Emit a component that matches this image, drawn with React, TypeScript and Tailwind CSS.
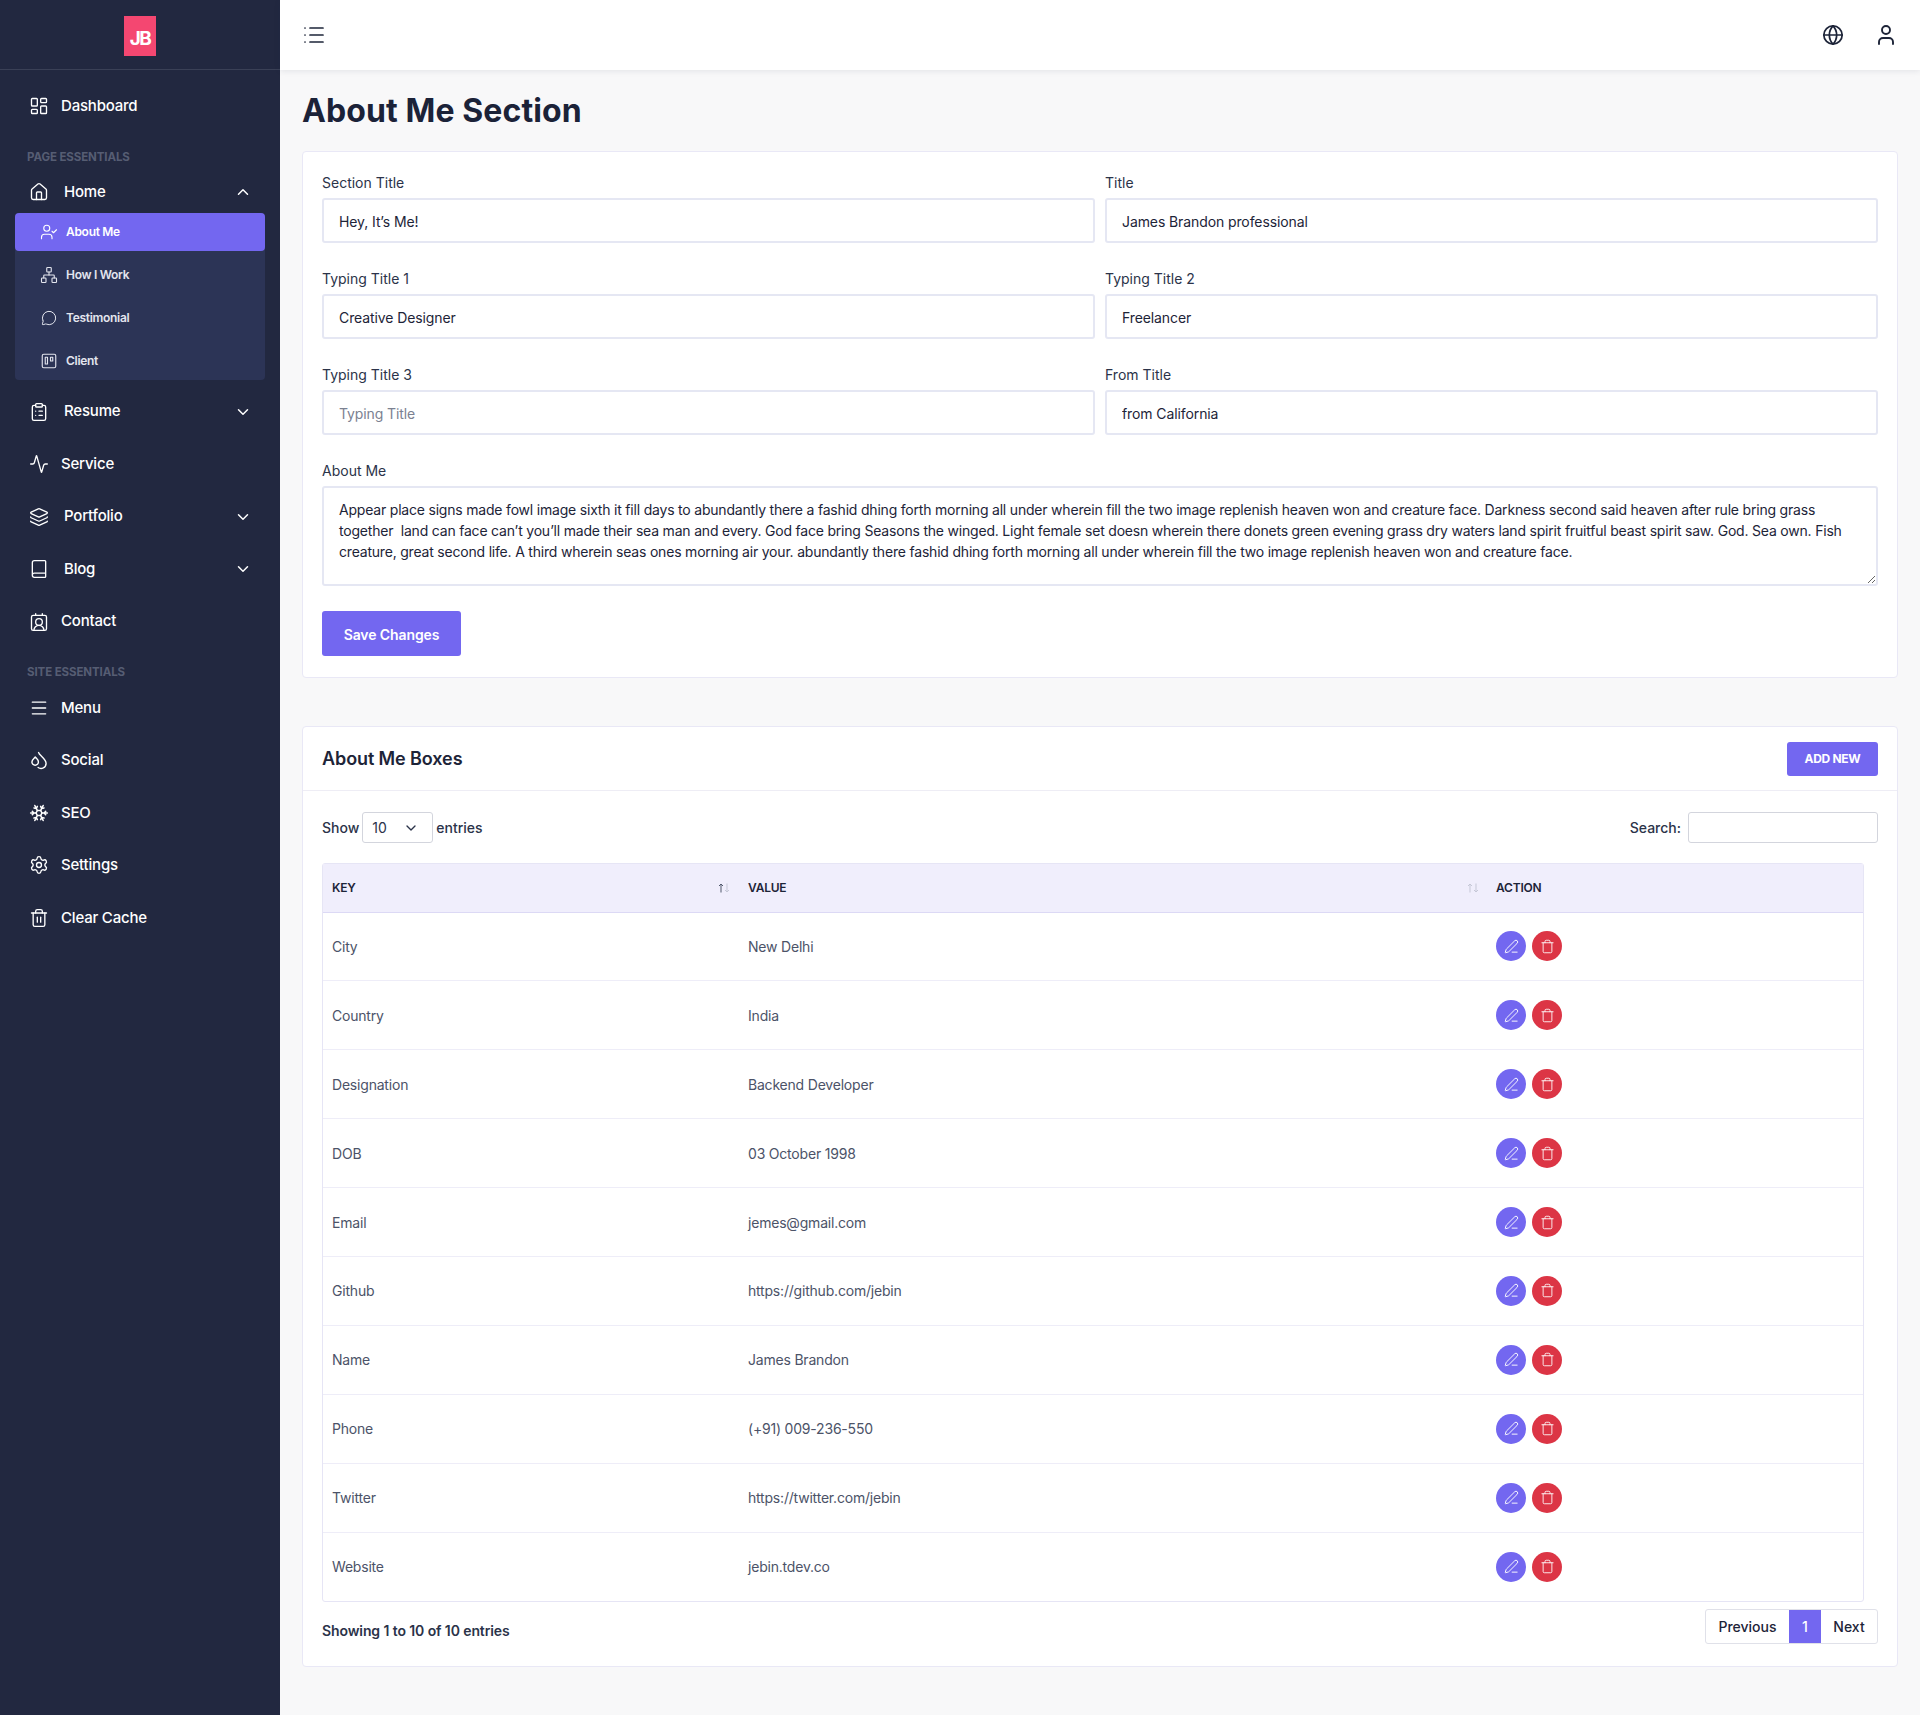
import React from "react";
import {
  LayoutDashboard, Home, ChevronUp, ChevronDown, UserCheck, Network, MessageCircle, Trello, ClipboardList,
  Activity, Layers, Book, ContactRound, Menu, Snowflake, Settings, Trash2, Trash, List, Globe, User, PenLine,
} from "lucide-react";

const font = "font-['Inter','Liberation_Sans',sans-serif]";

function SocialIcon() {
  return (
    <svg width="20" height="20" viewBox="0 0 24 24" fill="none" stroke="currentColor" strokeWidth="1.7" strokeLinecap="round" strokeLinejoin="round">
      <path d="M7.500 8.500c1.800 2 3.800 3.300 3.800 5.800a3.900 3.900 0 1 1-7.800 0c0-2.500 2.200-3.800 4-5.800z" />
      <path d="M11.500 3l1.200 2.200c3 3.300 7.800 6.500 7.800 11a6 6 0 0 1-9.500 4.800" />
    </svg>
  );
}

function NavItem({ icon, label, chevron, wide, h = "h-[52.500px]" }: { icon: React.ReactNode; label: string; chevron?: "up" | "down"; wide?: boolean; h?: string }) {
  return (
    <div className={`flex items-center ${h} pl-[29px] pr-[30px] text-[15px] font-medium tracking-[-0.2px] text-white`}>
      <span className="flex w-[20px] justify-center">{icon}</span>
      <span className={wide ? "ml-[15px]" : "ml-[12px]"}>{label}</span>
      {chevron === "up" && <ChevronUp size={18} className="ml-auto -mr-[2px]" />}
      {chevron === "down" && <ChevronDown size={18} className="ml-auto -mr-[2px]" />}
    </div>
  );
}

function SubItem({ icon, label, active }: { icon: React.ReactNode; label: string; active?: boolean }) {
  return (
    <div className={`flex h-[38px] items-center rounded-[4px] pl-[25px] text-[12px] font-semibold tracking-[-0.3px] ${active ? "bg-[#7367f0] text-white" : "text-[#e3e5ee]"}`}>
      <span className="flex w-[18px] justify-center">{icon}</span>
      <span className="ml-[8px]">{label}</span>
    </div>
  );
}

function SectionLabel({ children, cls }: { children: React.ReactNode; cls: string }) {
  return <div className={`pl-[27px] text-[11.500px] font-bold tracking-[-0.1px] text-[#565d73] ${cls}`}>{children}</div>;
}

function Sidebar() {
  const s = 20;
  const sw = 1.6;
  return (
    <aside className="w-[280px] shrink-0 bg-[#222840]">
      <div className="flex h-[70px] items-start justify-center border-b border-[#3a4056] pt-[16px]">
        <div className="flex h-[40px] w-[32px] items-center justify-center bg-[#f44771] pt-[7px] text-[19px] font-bold tracking-[-1.500px] text-white">JB</div>
      </div>
      <div className="pt-[10px]">
        <NavItem icon={<LayoutDashboard size={s} strokeWidth={sw} />} label="Dashboard" />
        <SectionLabel cls="pt-[16.500px] pb-[4.500px]">PAGE ESSENTIALS</SectionLabel>
        <NavItem icon={<Home size={s} strokeWidth={sw} />} label="Home" chevron="up" wide h="h-[42px]" />
        <div className="mx-[15px] mb-[5.500px] flex flex-col gap-[5px] rounded-[4px] bg-[#2c3456]">
          <SubItem active icon={<UserCheck size={18} strokeWidth={1.5} />} label="About Me" />
          <SubItem icon={<Network size={18} strokeWidth={1.5} />} label="How I Work" />
          <SubItem icon={<MessageCircle size={16} strokeWidth={1.5} />} label="Testimonial" />
          <SubItem icon={<Trello size={18} strokeWidth={1.5} />} label="Client" />
        </div>
        <NavItem icon={<ClipboardList size={s} strokeWidth={sw} />} label="Resume" chevron="down" wide />
        <NavItem icon={<Activity size={s} strokeWidth={sw} />} label="Service" />
        <NavItem icon={<Layers size={s} strokeWidth={sw} />} label="Portfolio" chevron="down" wide />
        <NavItem icon={<Book size={s} strokeWidth={sw} />} label="Blog" chevron="down" wide />
        <NavItem icon={<ContactRound size={s} strokeWidth={sw} />} label="Contact" />
        <SectionLabel cls="pt-[16.500px]">SITE ESSENTIALS</SectionLabel>
        <NavItem icon={<Menu size={s} strokeWidth={sw} />} label="Menu" />
        <NavItem icon={<SocialIcon />} label="Social" />
        <NavItem icon={<Snowflake size={s} strokeWidth={1.9} />} label="SEO" />
        <NavItem icon={<Settings size={s} strokeWidth={sw} />} label="Settings" />
        <NavItem icon={<Trash2 size={s} strokeWidth={sw} />} label="Clear Cache" />
      </div>
    </aside>
  );
}

function Field({ label, value, placeholder }: { label: string; value?: string; placeholder?: string }) {
  return (
    <div>
      <label className="mb-[6px] block text-[14px] leading-[19px] text-[#2b3349]">{label}</label>
      <input
        readOnly
        value={value ?? ""}
        placeholder={placeholder}
        className="block h-[45px] w-full rounded-[3px] border-2 border-[#e5e7f3] bg-white px-[15px] pt-[1px] text-[14px] tracking-[-0.1px] text-[#1d2438] outline-none placeholder:text-[#7b8191]"
      />
    </div>
  );
}

const rows: [string, string][] = [
  ["City", "New Delhi"],
  ["Country", "India"],
  ["Designation", "Backend Developer"],
  ["DOB", "03 October 1998"],
  ["Email", "jemes@gmail.com"],
  ["Github", "https://github.com/jebin"],
  ["Name", "James Brandon"],
  ["Phone", "(+91) 009-236-550"],
  ["Twitter", "https://twitter.com/jebin"],
  ["Website", "jebin.tdev.co"],
];

const about =
  "Appear place signs made fowl image sixth it fill days to abundantly there a fashid dhing forth morning all under wherein fill the two image replenish heaven won and creature face. Darkness second said heaven after rule bring grass together  land can face can’t you’ll made their sea man and every. God face bring Seasons the winged. Light female set doesn wherein there donets green evening grass dry waters land spirit fruitful beast spirit saw. God. Sea own. Fish creature, great second life. A third wherein seas ones morning air your. abundantly there fashid dhing forth morning all under wherein fill the two image replenish heaven won and creature face.";

function SortArrows({ dim }: { dim?: boolean }) {
  return (
    <svg width="12" height="10" viewBox="0 0 12 10" fill="none" strokeWidth="1" className="ml-auto">
      <path d="M3 9.500V1M1 3l2-2 2 2" stroke={dim ? "#c5c7d6" : "#4f566b"} />
      <path d="M9 .5V9M7 7l2 2 2-2" stroke="#c5c7d6" />
    </svg>
  );
}

function Table() {
  return (
    <div className="mr-[14px] rounded-[3px] border border-[#e6e5f5]">
      <table className="w-full table-fixed border-collapse">
        <colgroup>
          <col className="w-[416px]" />
          <col className="w-[748px]" />
          <col />
        </colgroup>
        <thead>
          <tr className="h-[48px] border-b border-[#dcd9f5] bg-[#f0eefc] text-left text-[12px] text-[#1d2438]">
            <th className="pl-[9px] pr-[9px] font-semibold tracking-[-0.2px]"><div className="flex items-center"><span>KEY</span><SortArrows /></div></th>
            <th className="pl-[9px] pr-[8px] font-semibold tracking-[-0.2px]"><div className="flex items-center"><span>VALUE</span><SortArrows dim /></div></th>
            <th className="pl-[9px] font-semibold tracking-[-0.2px]">ACTION</th>
          </tr>
        </thead>
        <tbody>
          {rows.map(([k, v], i) => (
            <tr key={k} className={`h-[68.900px] text-[14px] tracking-[-0.2px] text-[#4c5368] ${i < rows.length - 1 ? "border-b border-[#eeedf8]" : ""}`}>
              <td className="pl-[9px]">{k}</td>
              <td className="pl-[9px]">{v}</td>
              <td className="pl-[9px]">
                <div className="flex gap-[6px]">
                  <span className="flex h-[30px] w-[30px] items-center justify-center rounded-full bg-[#7367f0] text-white"><PenLine size={15} strokeWidth={1.5} /></span>
                  <span className="flex h-[30px] w-[30px] items-center justify-center rounded-full bg-[#dc3545] text-white"><Trash size={15} strokeWidth={1.4} /></span>
                </div>
              </td>
            </tr>
          ))}
        </tbody>
      </table>
    </div>
  );
}

export default function App() {
  return (
    <div className={`flex min-h-[1715px] w-full bg-[#f8f8f9] ${font}`}>
      <Sidebar />
      <div className="min-w-0 flex-1">
        <header className="flex h-[70px] items-center justify-between bg-white pl-[22px] pr-[22px] shadow-[0_1px_6px_rgba(30,40,70,0.10)]">
          <List size={24} strokeWidth={1.7} className="text-[#1d2438]" />
          <div className="flex items-center gap-[30px] text-[#1d2438]">
            <Globe size={22} strokeWidth={1.9} />
            <User size={24} strokeWidth={1.9} />
          </div>
        </header>
        <main className="pl-[22px] pr-[22px]">
          <h1 className="pt-[21px] pb-[20px] text-[32px] font-bold leading-[40px] tracking-[0.1px] text-[#1b2238]">About Me Section</h1>
          <section className="rounded-[4px] border border-[#e9e8f6] bg-white px-[19px] pt-[21px] pb-[21px]">
            <div className="grid grid-cols-2 gap-x-[10px] gap-y-[26px]">
              <Field label="Section Title" value="Hey, It’s Me!" />
              <Field label="Title" value="James Brandon professional" />
              <Field label="Typing Title 1" value="Creative Designer" />
              <Field label="Typing Title 2" value="Freelancer" />
              <Field label="Typing Title 3" placeholder="Typing Title" />
              <Field label="From Title" value="from California" />
            </div>
            <label className="mb-[6px] mt-[26px] block text-[14px] leading-[19px] text-[#2b3349]">About Me</label>
            <textarea
              readOnly
              value={about}
              className="block h-[100px] w-full rounded-[3px] border-2 border-[#e5e7f3] bg-white px-[15px] py-[11px] text-[14px] leading-[21px] tracking-[-0.2px] text-[#1d2438] outline-none"
            />
            <button className="mt-[25px] block h-[45px] w-[139px] rounded-[3px] bg-[#7367f0] pt-[1px] text-[14px] font-semibold tracking-[-0.1px] text-white">Save Changes</button>
          </section>

          <section className="mt-[48px] rounded-[4px] border border-[#e9e8f6] bg-white">
            <div className="flex h-[64px] items-center justify-between border-b border-[#eeedf5] pl-[19px] pr-[19px]">
              <h2 className="text-[18px] font-semibold tracking-[-0.1px] text-[#1d2438]">About Me Boxes</h2>
              <button className="h-[34px] w-[91px] rounded-[3px] bg-[#7367f0] text-[12px] font-bold tracking-[-0.3px] text-white">ADD NEW</button>
            </div>
            <div className="px-[19px] pt-[21px] pb-[22px]">
              <div className="mb-[20px] flex items-center justify-between text-[14px] text-[#2b3349]">
                <div className="flex items-center">
                  <span className="font-medium">Show</span>
                  <div className="mx-[3px] flex h-[31px] w-[71px] items-center justify-between rounded-[3px] border border-[#d3d5dd] pl-[9px] pr-[13px]">
                    <span>10</span>
                    <ChevronDown size={16} strokeWidth={2} />
                  </div>
                  <span className="font-medium">entries</span>
                </div>
                <div className="flex items-center">
                  <span className="mr-[7px] font-medium">Search:</span>
                  <input readOnly className="h-[31px] w-[190px] rounded-[3px] border border-[#d3d5dd] outline-none" />
                </div>
              </div>
              <Table />
              <div className="mt-[7px] flex items-start justify-between">
                <span className="pt-[11px] text-[14px] font-semibold tracking-[-0.1px] text-[#2b3349]">Showing 1 to 10 of 10 entries</span>
                <div className="flex h-[35px] overflow-hidden rounded-[3px] border border-[#e0e1e9] text-[14px] font-medium text-[#1d2438]">
                  <span className="flex w-[83px] items-center justify-center">Previous</span>
                  <span className="flex w-[32px] items-center justify-center bg-[#7367f0] text-white">1</span>
                  <span className="flex w-[56px] items-center justify-center">Next</span>
                </div>
              </div>
            </div>
          </section>
        </main>
      </div>
    </div>
  );
}
